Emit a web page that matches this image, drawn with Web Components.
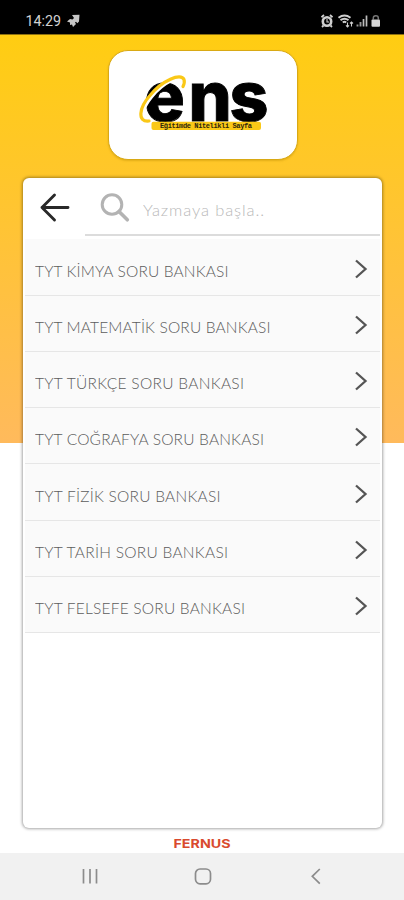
<!DOCTYPE html>
<html lang="tr">
<head>
<meta charset="utf-8">
<meta name="viewport" content="width=device-width, initial-scale=1">
<title>ENS</title>
<style>
  body { margin: 0; }
</style>
</head>
<body>
<ens-app>
  <ens-status-bar slot="status">14:29</ens-status-bar>
  <ens-logo></ens-logo>
  <ens-panel>
    <ens-search slot="header">Yazmaya başla..</ens-search>
    <ens-book width="193.5">TYT KİMYA SORU BANKASI</ens-book>
    <ens-book width="235.5">TYT MATEMATİK SORU BANKASI</ens-book>
    <ens-book width="209">TYT TÜRKÇE SORU BANKASI</ens-book>
    <ens-book width="229">TYT COĞRAFYA SORU BANKASI</ens-book>
    <ens-book width="185.5">TYT FİZİK SORU BANKASI</ens-book>
    <ens-book width="193">TYT TARİH SORU BANKASI</ens-book>
    <ens-book width="210">TYT FELSEFE SORU BANKASI</ens-book>
  </ens-panel>
  <ens-brand></ens-brand>
  <ens-nav-bar slot="nav"></ens-nav-bar>
</ens-app>

<script>
const define = (name, html, setup) => {
  const template = document.createElement('template');
  template.innerHTML = html;

  customElements.define(name, class extends HTMLElement {
    constructor () {
      super();
      this.attachShadow({mode: 'open'})
          .appendChild(template.content.cloneNode(true));
      if (setup) setup(this, this.shadowRoot);
    }
  });
};

define('ens-app', `
  <style>
    :host {
      background: white;
      display: flex;
      flex-direction: column;
      font-family: Lato, "Liberation Sans", sans-serif;
      height: 900px;
      overflow: hidden;
      width: 404px;
    }

    main {
      align-items: center;
      background: linear-gradient(#ffcd12, #ffc62c 36%, #ffba5c) 0 0 / 100% 408px no-repeat;
      box-sizing: border-box;
      display: flex;
      flex: 1;
      flex-direction: column;
      padding-top: 14.5px;
    }
  </style>
  <slot name="status"></slot>
  <main><slot></slot></main>
  <slot name="nav"></slot>
`);

define('ens-status-bar', `
  <style>
    :host {
      align-items: center;
      background: black;
      border-bottom: 1px solid #8d7110;
      box-sizing: border-box;
      color: #d2d2d2;
      display: flex;
      font: 14.3px/16px Roboto, sans-serif;
      height: 35px;
      padding: 8px 22px 0 25.5px;
    }

    svg { display: block; }
    .note { margin-left: 6px; }
    .system { margin-left: auto; }
  </style>
  <slot></slot>
  <svg class="note" width="13" height="14" viewBox="0 0 13 14" fill="#c6c6c6">
    <path d="M5 1 12.5 .8 12 7.5 10.3 9.3 9 7.8 8 8.5 9 10 6 13 5 10.5 3 11 3 8.5 0 7.5 3 5 5.5 5.5 7 4Z"/>
  </svg>
  <svg class="system" width="62" height="16" viewBox="0 0 62 16" fill="none" stroke="#cfcfcf">
    <circle cx="7" cy="8.5" r="4.2" stroke-width="2.6"/>
    <path d="M1.5 4.2 4 2M10 2l2.5 2.2M3.5 12.5 2 14M10.5 12.5 12 14" stroke-width="1.8"/>
    <path d="M7 6v3h2" stroke-width="1.1"/>
    <path d="M18.5 4.8Q24.5 .3 30.5 4.8M20.5 7.1Q24.5 4.3 28.5 7.1M22.8 9.4Q24.5 8 26.2 9.4" stroke-width="1.9"/>
    <path d="M27.5 9.5v4.3M26 12.4 27.5 14l1.5-1.6M31.5 13.5V9M30 10.5 31.5 9l1.5 1.5" stroke-width="1.1"/>
    <path d="M37.5 13.5v-2M40.5 13.5V9" stroke="#999" stroke-width="1.9"/>
    <path d="M43.5 13.5V6M46.5 13.5V2.5" stroke="#bcbcbc" stroke-width="1.7"/>
    <path d="M53.3 6.5V5q0-2.2 2.5-2.2T58.3 5v1.5" stroke="#777" stroke-width="1.5"/>
    <rect x="51.5" y="6.5" width="8.5" height="7.3" rx="1" fill="#d6d6d6" stroke="none"/>
  </svg>
`);

define('ens-logo', `
  <style>
    :host {
      background: white;
      border: 1px solid #d9a914;
      border-radius: 20px;
      box-shadow: 0 1px 2px #b98a0066;
      box-sizing: border-box;
      display: block;
      height: 110px;
      margin-left: 1px;
      width: 190px;
    }

    svg { display: block; }
  </style>
  <svg width="188" height="108" viewBox="109 50.5 188 108">
    <text x="144 188.5 229.5" y="120.2"
      font-family="Inter, sans-serif" font-size="68" font-weight="800"
      stroke="#000" stroke-width=".9">ens</text>
    <path d="M148.5 120.5C139 121 141 108 151 96C163 81 182 72 185 79Q186 82 184 86"
      fill="none" stroke="#fff" stroke-width="4.5"/>
    <path d="M149 120.5C137 122 139 107 150 95C162 80 181 72 184 79Q185 82 183 86"
      fill="none" stroke="#fac817" stroke-width="3.2" stroke-linecap="round"/>
    <rect x="151.5" y="121.3" width="109.5" height="8.2" rx="2" fill="#fac817"/>
    <text x="160" y="127.3" textLength="92" lengthAdjust="spacing"
      font-family="Liberation Mono, monospace" font-size="7" font-weight="700" fill="#30270a">Eğitimde Nitelikli Sayfa</text>
  </svg>
`);

define('ens-panel', `
  <style>
    :host {
      background: white;
      border-radius: 6px;
      box-shadow: 0 0 3px 1px #00000059;
      box-sizing: border-box;
      display: block;
      height: 650px;
      margin-top: 18.5px;
      padding: 0 2px;
      width: 359px;
    }
  </style>
  <slot name="header"></slot>
  <slot></slot>
`);

define('ens-search', `
  <style>
    :host {
      display: flex;
      height: 61.3px;
    }

    .back { padding: 14px 0 0 14px; width: 46px; }

    .field {
      border-bottom: 2px solid #dcdcdc;
      box-sizing: border-box;
      display: flex;
      flex: 1;
      height: 58px;
    }

    .lens { margin: 14px 0 0 15px; }
    .label { margin: 18px 0 0 11px; }
    svg { display: block; }
  </style>
  <div class="back">
    <svg width="32" height="32" viewBox="0 0 32 32" fill="none" stroke="#292929" stroke-width="2.9" stroke-linecap="round" stroke-linejoin="round">
      <path d="M29 15.5H3M15.5 3 3 15.5 15.5 28"/>
    </svg>
  </div>
  <div class="field">
    <svg class="lens" width="32" height="32" viewBox="0 0 32 32" fill="none" stroke="#b3b3b3">
      <circle cx="12" cy="12.5" r="9.8" stroke-width="3"/>
      <path d="m19 19.5 8.3 8.3" stroke-width="3.6" stroke-linecap="round"/>
    </svg>
    <svg class="label" width="130" height="26">
      <text x="0" y="19.5" textLength="121" font-size="16.5" font-weight="300" fill="#b8b8b8"></text>
    </svg>
  </div>
`, (host, root) => {
  root.querySelector('text').textContent = host.textContent;
});

define('ens-book', `
  <style>
    :host {
      align-items: center;
      background: #fafafa;
      border-bottom: 1px solid #e6e6e6;
      box-sizing: border-box;
      display: flex;
      height: 56.25px;
      justify-content: space-between;
      padding: 3.5px 11px 0 10px;
    }

    svg { display: block; }
    .label { margin-top: 4px; }
  </style>
  <svg class="label" width="260" height="24">
    <text x="0" y="18" font-size="15.5" font-weight="300" fill="#5c5c5c"></text>
  </svg>
  <svg width="16" height="22" viewBox="0 0 16 22" fill="none" stroke="#555" stroke-width="2.3">
    <path d="m3 2.500 9.5 8.5L3 19.500"/>
  </svg>
`, (host, root) => {
  const text = root.querySelector('text');
  text.textContent = host.textContent;
  text.setAttribute('textLength', host.getAttribute('width'));
});

define('ens-brand', `
  <style>
    :host { display: block; margin-top: 8px; }
    svg { display: block; }
  </style>
  <svg width="60" height="14">
    <text x="1.5" y="12" textLength="57" lengthAdjust="spacingAndGlyphs"
      font-family="Inter, sans-serif" font-size="11.5" font-weight="700" fill="#d94a2e">FERNUS</text>
  </svg>
`);

define('ens-nav-bar', `
  <style>
    :host {
      background: #f1f1f1;
      display: grid;
      grid-template-columns: repeat(3, 113.3px);
      height: 47px;
      justify-content: center;
      justify-items: center;
      padding-left: 2px;
    }

    svg { display: block; margin-top: 13px; }
  </style>
  <svg width="20" height="20" fill="none" stroke="#8c8c8c" stroke-width="1.7"><path d="M3.5 3v14.5M10 3v14.5M16.500 3v14.5"/></svg>
  <svg width="20" height="20" fill="none" stroke="#8c8c8c" stroke-width="1.7"><rect x="2.5" y="3" width="15" height="14.8" rx="4.5"/></svg>
  <svg width="20" height="20" fill="none" stroke="#8c8c8c" stroke-width="1.7"><path d="m13.8 3-7.5 7.3 7.5 7.3"/></svg>
`);
</script>
</body>
</html>
